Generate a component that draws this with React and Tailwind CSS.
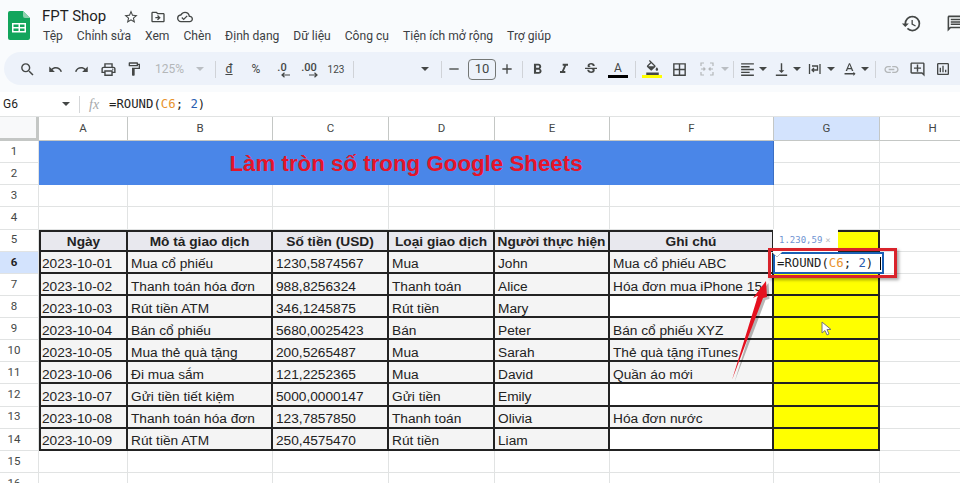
import {
  MdSearch,
  MdUndo,
  MdRedo,
  MdOutlinePrint,
  MdOutlineFormatPaint,
  MdFormatBold,
  MdFormatItalic,
  MdStrikethroughS,
  MdOutlineFormatColorFill,
  MdBorderAll,
  MdFormatAlignLeft,
  MdVerticalAlignBottom,
  MdTextRotationNone,
  MdLink,
  MdOutlineAddComment,
  MdOutlineInsertChart,
  MdHistory,
  MdOutlineMessage,
  MdStarBorder,
  MdOutlineDriveFileMove,
  MdOutlineCloudDone,
  MdAdd,
  MdRemove,
} from "react-icons/md";

const menus = ["Tệp", "Chỉnh sửa", "Xem", "Chèn", "Định dạng", "Dữ liệu", "Công cụ", "Tiện ích mở rộng", "Trợ giúp"];

const columns = ["A", "B", "C", "D", "E", "F", "G", "H"];

const headers = ["Ngày", "Mô tả giao dịch", "Số tiền (USD)", "Loại giao dịch", "Người thực hiện", "Ghi chú"];

const rows = [
  ["2023-10-01", "Mua cổ phiếu", "1230,5874567", "Mua", "John", "Mua cổ phiếu ABC"],
  ["2023-10-02", "Thanh toán hóa đơn", "988,8256324", "Thanh toán", "Alice", "Hóa đơn mua iPhone 15"],
  ["2023-10-03", "Rút tiền ATM", "346,1245875", "Rút tiền", "Mary", ""],
  ["2023-10-04", "Bán cổ phiếu", "5680,0025423", "Bán", "Peter", "Bán cổ phiếu XYZ"],
  ["2023-10-05", "Mua thẻ quà tặng", "200,5265487", "Mua", "Sarah", "Thẻ quà tặng iTunes"],
  ["2023-10-06", "Đi mua sắm", "121,2252365", "Mua", "David", "Quần áo mới"],
  ["2023-10-07", "Gửi tiền tiết kiệm", "5000,0000147", "Gửi tiền", "Emily", ""],
  ["2023-10-08", "Thanh toán hóa đơn", "123,7857850", "Thanh toán", "Olivia", "Hóa đơn nước"],
  ["2023-10-09", "Rút tiền ATM", "250,4575470", "Rút tiền", "Liam", ""],
];

const SheetsLogo = () => (
  <svg width="22" height="29" viewBox="0 0 22 29" className="shrink-0">
    <path d="M2 0h13l7 7v20a2 2 0 0 1-2 2H2a2 2 0 0 1-2-2V2a2 2 0 0 1 2-2z" fill="#12a55c" />
    <path d="M15 0l7 7h-5a2 2 0 0 1-2-2z" fill="#8ed1ae" />
    <path d="M4 12h14v9.500H4z" fill="#fff" />
    <path d="M10.500 13.500h-5v2.500h5zM16.500 13.500h-4.500v2.500h4.500zM10.500 17.500h-5v2.500h5zM16.500 17.500h-4.500v2.500h4.500z" fill="#12a55c" />
  </svg>
);

const Divider = ({ className }) => <div className={`h-[17px] w-px shrink-0 bg-[#d0d3d8] ${className}`} />;

const Caret = ({ className = "" }) => (
  <div className={`flex h-5 w-[10px] shrink-0 items-center justify-center ${className}`}>
    <div className="h-0 w-0 border-x-[4px] border-t-[4px] border-x-transparent border-t-[#444746]" />
  </div>
);

const Tool = ({ className = "", children }) => (
  <div className={`flex h-6 shrink-0 items-center justify-center text-[#444746] ${className}`}>{children}</div>
);

const Toolbar = () => (
  <div className="ml-[4px] flex h-[33px] items-center rounded-l-full bg-[#edf2fa] pl-[10px] pt-px font-['Roboto',sans-serif]">
    <Tool className="w-[26px]"><MdSearch size={17} /></Tool>
    <Tool className="ml-[2px] w-[26px]"><MdUndo size={15} /></Tool>
    <Tool className="w-[26px]"><MdRedo size={15} /></Tool>
    <Tool className="ml-px w-[26px]"><MdOutlinePrint size={17} /></Tool>
    <Tool className="w-[26px]"><MdOutlineFormatPaint size={16} /></Tool>
    <Tool className="ml-[8px] w-[30px] justify-start text-[12px] text-[#b4b7b9]">125%</Tool>
    <Caret className="ml-[10px] opacity-30" />
    <Divider className="ml-[10px]" />
    <Tool className="w-[26px] text-[12px] underline">đ</Tool>
    <Tool className="ml-px w-[26px] text-[12px]">%</Tool>
    <Tool className="w-[26px]">
      <div className="relative -mt-[3px] text-[11px] font-medium leading-none">
        .0
        <svg width="9" height="6" viewBox="0 0 9 6" className="absolute left-[4px] top-[10px]">
          <path d="M9 3H1.500M3.500 .8L1 3l2.500 2.200" stroke="#444746" strokeWidth="1.200" fill="none" />
        </svg>
      </div>
    </Tool>
    <Tool className="ml-px w-[26px]">
      <div className="relative -mt-[3px] text-[11px] font-medium leading-none">
        .00
        <svg width="9" height="6" viewBox="0 0 9 6" className="absolute left-[8px] top-[10px]">
          <path d="M0 3h7.500M5.500 .8L8 3 5.500 5.200" stroke="#444746" strokeWidth="1.200" fill="none" />
        </svg>
      </div>
    </Tool>
    <Tool className="ml-px w-[26px] text-[10px]">123</Tool>
    <Divider className="ml-[4px]" />
    <Caret className="ml-[66px]" />
    <Divider className="ml-[11px]" />
    <Tool className="ml-[2px] w-[20px]"><MdRemove size={16} /></Tool>
    <Tool className="ml-[4px] h-[21px] w-[28px] rounded-[4px] border border-[#747775] text-[13px]">10</Tool>
    <Tool className="ml-px w-[20px]"><MdAdd size={16} /></Tool>
    <Divider className="ml-[5px]" />
    <Tool className="ml-px w-[26px]"><MdFormatBold size={17} /></Tool>
    <Tool className="ml-px w-[26px]"><MdFormatItalic size={16} /></Tool>
    <Tool className="ml-px w-[26px]"><MdStrikethroughS size={16} /></Tool>
    <Tool className="ml-px w-[26px] flex-col">
      <span className="text-[12px] leading-[14px]">A</span>
      <div className="h-[3px] w-[20px] bg-black" />
    </Tool>
    <Divider className="ml-[4px]" />
    <Tool className="ml-[3px] w-[26px] flex-col">
      <MdOutlineFormatColorFill size={15} />
      <div className="h-[3px] w-[20px] bg-[#ffff00]" />
    </Tool>
    <Tool className="ml-px w-[26px]"><MdBorderAll size={17} /></Tool>
    <Tool className="ml-[2px] w-[26px]">
      <svg width="16" height="16" viewBox="0 0 16 16" fill="none" stroke="#b4b7b9" strokeWidth="1.200">
        <path d="M2 5V2h3M14 5V2h-3M2 11v3h3M14 11v3h-3M2 8h3.500M14 8h-3.500M4.500 6.500L6 8 4.500 9.500M11.500 6.500L10 8l1.500 1.500" />
      </svg>
    </Tool>
    <Caret className="opacity-30" />
    <Divider className="ml-[3px]" />
    <Tool className="ml-[2px] w-[22px]"><MdFormatAlignLeft size={17} /></Tool>
    <Caret />
    <Tool className="ml-[2px] w-[22px]"><MdVerticalAlignBottom size={17} /></Tool>
    <Caret />
    <Tool className="ml-[2px] w-[22px]">
      <svg width="14" height="14" viewBox="0 0 14 14" fill="none" stroke="#444746" strokeWidth="1.300">
        <path d="M1.500 2v10M12 2v10M4 4h5.500v4H4M6 6l-2 2 2 2" />
      </svg>
    </Tool>
    <Caret />
    <Tool className="ml-[2px] w-[22px]"><MdTextRotationNone size={17} /></Tool>
    <Caret />
    <Divider className="ml-[5px]" />
    <Tool className="ml-[2px] w-[26px] text-[#b4b7b9]"><MdLink size={17} /></Tool>
    <Tool className="w-[26px]"><MdOutlineAddComment size={17} /></Tool>
    <Tool className="w-[26px]"><MdOutlineInsertChart size={16} /></Tool>
  </div>
);

const Header = () => (
  <div className="flex h-[52px] pl-[8px] pt-[11px] font-['Roboto',sans-serif]">
    <SheetsLogo />
    <div className="ml-[12px] flex flex-1 flex-col">
      <div className="-mt-[6px] flex h-[23px] items-center text-[#1f1f1f]">
        <span className="w-[81px] text-[15px]">FPT Shop</span>
        <div className="flex items-center gap-[11px] text-[#444746]">
          <MdStarBorder size={16} />
          <MdOutlineDriveFileMove size={16} />
          <MdOutlineCloudDone size={16} />
        </div>
      </div>
      <div className="-mt-[2px] ml-px flex gap-[14px] text-[12.100px] leading-5 text-[#3c4043]">
        {menus.map((m) => (
          <span key={m}>{m}</span>
        ))}
      </div>
    </div>
    <div className="flex items-start gap-[24px] pt-[2px] text-[#444746]">
      <MdHistory size={21} />
      <MdOutlineMessage size={19} className="-mr-[5px] mt-px" />
    </div>
  </div>
);

const FormulaBar = () => (
  <div className="mt-[7px] flex h-[24px] items-center bg-white pl-[3px] text-[#1f1f1f]">
    <span className="w-[58px] font-['Roboto',sans-serif] text-[12px]">G6</span>
    <Caret />
    <div className="ml-[8px] h-[17px] w-px bg-[#d5d7d9]" />
    <span className="ml-[9px] w-[20px] font-['Liberation_Serif',serif] text-[14px] italic text-[#a6a8aa]">fx</span>
    <span className="font-['DejaVu_Sans_Mono',monospace] text-[12.300px]">
      =ROUND(<span className="text-[#e8932e]">C6</span>; <span className="text-[#2a5db0]">2</span>)
    </span>
  </div>
);

const tableCell = "flex items-center overflow-hidden whitespace-nowrap border-r-2 border-b-2 border-[#222] text-[13.700px] text-[#222] font-['Liberation_Sans',sans-serif]";
const plainCell = "border-r border-b border-[#e1e3e3] bg-white";
const rowHead = "flex items-center justify-center border-r border-b border-[#e1e3e3] bg-white pr-[10px] font-['Roboto',sans-serif] text-[11.500px] text-[#444746]";

const Sheet = () => (
  <div className="grid grid-cols-[39px_89px_145px_116px_106px_115px_164px_106px_106px] grid-rows-[24px] auto-rows-[22.140px]">
    <div className="border-r-[3px] border-b-[3px] border-[#c4c7c5] bg-[#f8f9fa]" />
    {columns.map((c) => (
      <div
        key={c}
        className={
          c === "G"
            ? "flex items-center justify-center border-r border-b border-[#c4c7c5] bg-[#d3e3fd] pt-px font-['Roboto',sans-serif] text-[11.500px] text-[#444746]"
            : "flex items-center justify-center border-r border-b border-[#c4c7c5] bg-white pt-px font-['Roboto',sans-serif] text-[11.500px] text-[#444746]"
        }
      >
        {c}
      </div>
    ))}

    {/* dong 1-2: tieu de gop o */}
    <div className={rowHead}>1</div>
    <div className="col-span-6 row-span-2 flex items-center justify-center border-r border-[#3b6fc4] bg-[#4a86e8] pt-[2px] font-['Liberation_Sans',sans-serif] text-[22.300px] font-bold text-[#e5142a]">
      Làm tròn số trong Google Sheets
    </div>
    <div className={plainCell} />
    <div className={plainCell} />
    <div className={rowHead}>2</div>
    <div className={plainCell} />
    <div className={plainCell} />

    {[3, 4].map((n) => (
      <div key={n} className="contents">
        <div className={rowHead}>{n}</div>
        {columns.map((c) => (
          <div key={c} className={plainCell} />
        ))}
      </div>
    ))}

    <div className={rowHead}>5</div>
    {headers.map((h, i) => (
      <div
        key={h}
        className={`${tableCell} justify-center border-t-2 bg-[#e8e8ee] pt-[3px] font-bold ${i === 0 ? "border-l-2" : ""}`}
      >
        {h}
      </div>
    ))}
    <div className={`${tableCell} border-t-2 bg-[#ffff00]`} />
    <div className={plainCell} />

    {rows.map((row, r) => (
      <div key={r} className="contents">
        <div
          className={
            r === 0
              ? "flex items-center justify-center border-r border-b border-[#e1e3e3] bg-[#d3e3fd] pr-[10px] font-['Roboto',sans-serif] text-[11.500px] font-bold text-[#1f1f1f]"
              : rowHead
          }
        >
          {r + 6}
        </div>
        {row.map((v, i) => (
          <div
            key={i}
            className={`${tableCell} pt-[6px] ${i === 0 ? "border-l-2 pl-px" : "pl-[3px]"} ${i === 5 && v === "" ? "bg-white" : "bg-[#f4f4f4]"}`}
          >
            {v}
          </div>
        ))}
        <div className={`${tableCell} bg-[#ffff00]`} />
        <div className={plainCell} />
      </div>
    ))}

    {[15, 16].map((n) => (
      <div key={n} className="contents">
        <div className={rowHead}>{n}</div>
        {columns.map((c) => (
          <div key={c} className={plainCell} />
        ))}
      </div>
    ))}
  </div>
);

// phan chu thich nam de len bang: o dang sua, khung do, mui ten, con tro
const Overlays = () => (
  <>
    <div className="absolute left-[773px] top-[229px] flex h-[23px] w-[65px] items-center bg-white pl-[6px] font-['DejaVu_Sans_Mono',monospace] text-[9px] text-[#6f93d2]">
      <span>1.230,59</span>
      <span className="ml-[3px] text-[#b8bcc2]">×</span>
    </div>
    <div className="absolute left-[773px] top-[252px] flex h-[22px] w-[111px] items-center border-2 border-[#1a5fb4] bg-white pl-[2px] font-['DejaVu_Sans_Mono',monospace] text-[12.300px] text-[#1f1f1f]">
      <span>
        =ROUND(<span className="text-[#e8932e]">C6</span>; <span className="text-[#2a5db0]">2</span>)
      </span>
      <div className="absolute right-[1px] top-[3px] h-[13px] w-px bg-black" />
    </div>
    <div className="absolute left-[768px] top-[248px] h-[30px] w-[129px] border-[3px] border-[#d9232b] shadow-[2px_2px_3px_rgba(0,0,0,0.35)]" />
    <svg width="14" height="6" viewBox="0 0 14 6" className="absolute left-[771px] top-[252px]">
      <path d="M1 0l5 5 5-5" fill="#fff" stroke="#b8bcc2" />
    </svg>
    <svg width="60" height="120" viewBox="0 0 60 120" className="absolute left-[720px] top-[272px] overflow-visible">
      <path d="M46 9L47 25 43 26 12 108 38 23.500 33 26z" fill="#000" opacity="0.28" transform="translate(2.500 2)" />
      <path d="M46 9L47 25 43 26 12 108 38 23.500 33 26z" fill="#e5101f" />
    </svg>
    <svg width="11" height="15" viewBox="0 0 11 15" className="absolute left-[821px] top-[321px]">
      <path d="M1 1v11l3-2.500 2 4.500 2-1-2-4.500h4z" fill="#fff" stroke="#777" />
    </svg>
  </>
);

export default function App() {
  return (
    <div className="relative h-[483px] w-[960px] overflow-hidden bg-[#f9fbfd]">
      <Header />
      <Toolbar />
      <FormulaBar />
      <div className="h-px bg-[#e1e3e3]" />
      <Sheet />
      <Overlays />
    </div>
  );
}
